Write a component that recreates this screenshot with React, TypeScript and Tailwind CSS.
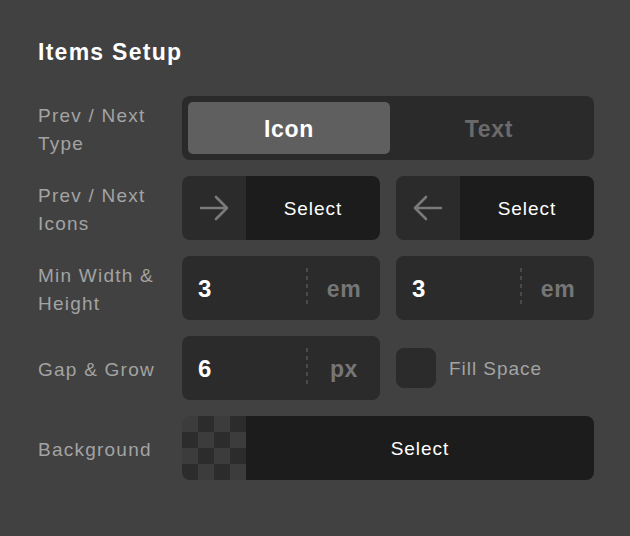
import React from "react";

const font = { fontFamily: '"Liberation Sans", Arial, sans-serif' };

function Arrow({ dir }: { dir: "right" | "left" }) {
  return (
    <svg width="32" height="32" viewBox="0 0 32 32" fill="none">
      {dir === "right" ? (
        <path d="M3 16H29M18 5L29 16L18 27" stroke="#7a7a7a" strokeWidth="2.6" strokeLinecap="round" strokeLinejoin="round" />
      ) : (
        <path d="M29 16H3M14 5L3 16L14 27" stroke="#7a7a7a" strokeWidth="2.6" strokeLinecap="round" strokeLinejoin="round" />
      )}
    </svg>
  );
}

function Label({ children }: { children: React.ReactNode }) {
  return (
    <div className="w-[144px] shrink-0 pt-[3px] text-[19px] leading-[28px] tracking-[0.065em] text-[#a3a3a3]">
      {children}
    </div>
  );
}

function IconSelect({ dir }: { dir: "right" | "left" }) {
  return (
    <div className="flex h-[64px] flex-1 overflow-hidden rounded-[8px]">
      <div className="flex w-[64px] items-center justify-center bg-[#2b2b2b]">
        <Arrow dir={dir} />
      </div>
      <div className="flex flex-1 items-center justify-center bg-[#1c1c1c] pt-[3px] text-[19px] tracking-[0.05em] text-white">
        Select
      </div>
    </div>
  );
}

function Divider() {
  return (
    <svg width="2" height="40" viewBox="0 0 2 40" className="shrink-0">
      <line x1="1" y1="0" x2="1" y2="40" stroke="#555555" strokeWidth="1.5" strokeDasharray="4 4" />
    </svg>
  );
}

function NumInput({ value, unit }: { value: string; unit: string }) {
  return (
    <div className="flex h-[64px] flex-1 items-center rounded-[8px] bg-[#2b2b2b]">
      <div className="w-[124px] pl-[16px] pt-[2px] text-[24px] font-bold text-white">{value}</div>
      <Divider />
      <div className="flex flex-1 justify-center pt-[2px] text-[23px] font-bold tracking-[0.03em] text-[#767676]">{unit}</div>
    </div>
  );
}

function Checker() {
  const cells = [] as React.ReactNode[];
  for (let r = 0; r < 4; r++) {
    for (let c = 0; c < 4; c++) {
      const light = (r + c) % 2 === 0;
      cells.push(<div key={`${r}-${c}`} className={light ? "bg-[#3c3c3c]" : "bg-[#2c2c2c]"} />);
    }
  }
  return <div className="grid h-[64px] w-[64px] grid-cols-4 grid-rows-4">{cells}</div>;
}

export default function App() {
  return (
    <div className="h-[536px] w-[630px] bg-[#414141] pl-[38px] pt-[38px]" style={font}>
      <div className="h-[28px] text-[23px] font-bold leading-[28px] tracking-[0.055em] text-white">Items Setup</div>
      <div className="mt-[30px] flex w-[556px] flex-col gap-[16px]">
        <div className="flex h-[64px] items-center">
          <Label>
            Prev / Next
            <br />
            Type
          </Label>
          <div className="flex h-[64px] flex-1 rounded-[8px] bg-[#2a2a2a] p-[6px]">
            <div className="flex w-[202px] items-center justify-center rounded-[5px] bg-[#5f5f5f] pt-[2px] text-[23px] font-bold tracking-[0.03em] text-white">
              Icon
            </div>
            <div className="flex flex-1 items-center justify-center pt-[2px] text-[23px] font-bold tracking-[0.03em] text-[#6a6a6a]">
              Text
            </div>
          </div>
        </div>
        <div className="flex h-[64px] items-center">
          <Label>
            Prev / Next
            <br />
            Icons
          </Label>
          <div className="flex flex-1 gap-[16px]">
            <IconSelect dir="right" />
            <IconSelect dir="left" />
          </div>
        </div>
        <div className="flex h-[64px] items-center">
          <Label>
            Min Width &amp;
            <br />
            Height
          </Label>
          <div className="flex flex-1 gap-[16px]">
            <NumInput value="3" unit="em" />
            <NumInput value="3" unit="em" />
          </div>
        </div>
        <div className="flex h-[64px] items-center">
          <Label>Gap &amp; Grow</Label>
          <div className="flex flex-1 gap-[16px]">
            <NumInput value="6" unit="px" />
            <div className="flex flex-1 items-center gap-[13px]">
              <div className="h-[40px] w-[40px] rounded-[8px] bg-[#2b2b2b]" />
              <div className="pt-[3px] text-[19px] tracking-[0.05em] text-[#a3a3a3]">Fill Space</div>
            </div>
          </div>
        </div>
        <div className="flex h-[64px] items-center">
          <Label>Background</Label>
          <div className="flex h-[64px] flex-1 overflow-hidden rounded-[8px]">
            <Checker />
            <div className="flex flex-1 items-center justify-center bg-[#1c1c1c] pt-[3px] text-[19px] tracking-[0.05em] text-white">
              Select
            </div>
          </div>
        </div>
      </div>
    </div>
  );
}
